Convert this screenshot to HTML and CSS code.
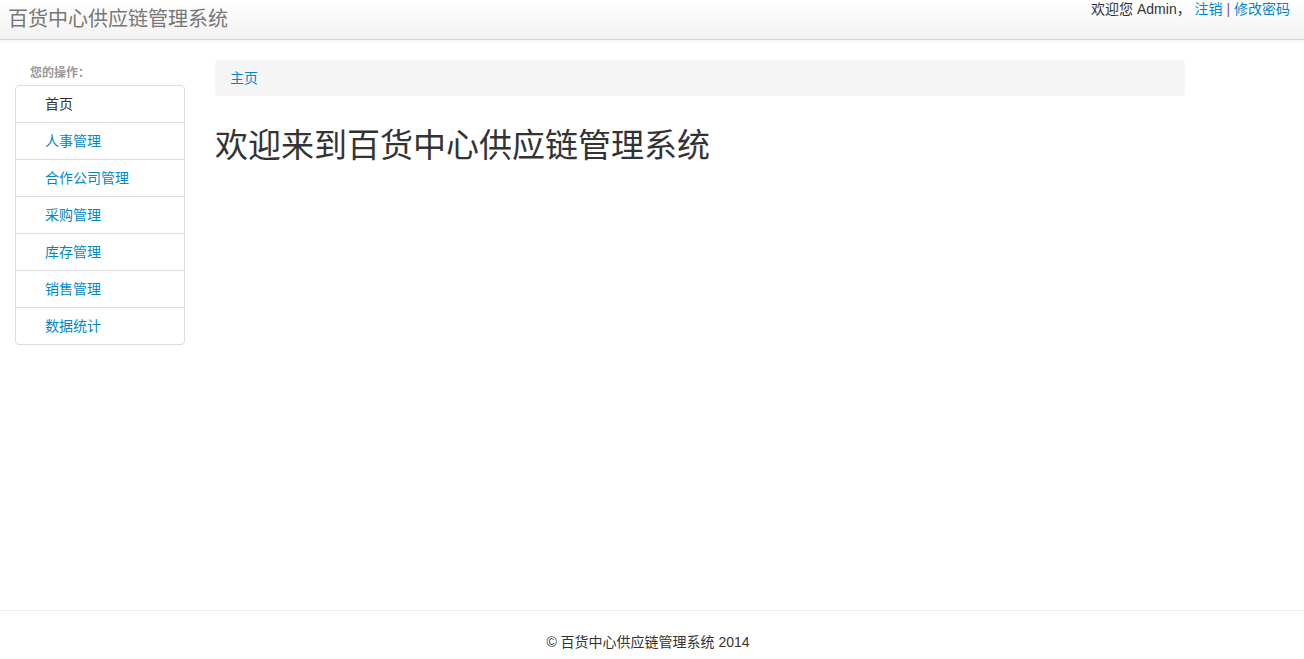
FILE: index.html
```html
<!DOCTYPE html>
<html lang="zh">
<head>
<meta charset="utf-8">
<title>百货中心供应链管理系统</title>
<link rel="stylesheet" href="styles.css">
</head>
<body>
<header class="navbar">
  <div class="brand">百货中心供应链管理系统</div>
  <div class="userbar">欢迎您 Admin， <a href="#">注销</a> <span class="sep">|</span> <a href="#">修改密码</a></div>
</header>
<main class="main">
  <aside class="sidebar">
    <div class="side-label">您的操作：</div>
    <ul class="side-nav">
      <li class="active"><a href="#">首页</a></li>
      <li><a href="#">人事管理</a></li>
      <li><a href="#">合作公司管理</a></li>
      <li><a href="#">采购管理</a></li>
      <li><a href="#">库存管理</a></li>
      <li><a href="#">销售管理</a></li>
      <li><a href="#">数据统计</a></li>
    </ul>
  </aside>
  <section class="content">
    <div class="breadcrumb"><a href="#">主页</a></div>
    <h1 class="welcome">欢迎来到百货中心供应链管理系统</h1>
  </section>
</main>
<footer class="footer">© 百货中心供应链管理系统 2014</footer>
</body>
</html>
```
FILE: styles.css
```css
html, body {
  margin: 0;
  padding: 0;
}
body {
  font-family: "Liberation Sans", Arial, "Noto Sans CJK SC", sans-serif;
  font-size: 14px;
  color: #333;
  background: #fff;
  min-height: 100vh;
  display: flex;
  flex-direction: column;
}
a {
  color: #0088cc;
  text-decoration: none;
}
.navbar {
  height: 39px;
  background: linear-gradient(to bottom, #ffffff, #f2f2f2);
  border-bottom: 1px solid #d4d4d4;
  box-shadow: 0 1px 4px rgba(0,0,0,0.065);
  display: flex;
  justify-content: space-between;
  align-items: flex-start;
}
.brand {
  font-size: 20px;
  color: #777;
  padding: 7px 0 0 8px;
  line-height: 24px;
}
.userbar {
  padding: 0 14px 0 0;
  line-height: 18px;
  font-size: 14px;
  color: #333;
}
.userbar .sep {
  color: #7a4f9a;
}
.main {
  flex: 1;
  display: flex;
  align-items: flex-start;
  padding: 20px 0 0 15px;
  gap: 30px;
}
.sidebar {
  width: 170px;
}
.side-label {
  font-size: 12px;
  font-weight: bold;
  color: #999;
  line-height: 14px;
  padding: 6px 0 5px 15px;
}
.side-nav {
  list-style: none;
  margin: 0;
  padding: 0;
  border: 1px solid #ddd;
  border-radius: 4px;
}
.side-nav li {
  border-top: 1px solid #ddd;
}
.side-nav li:first-child {
  border-top: none;
}
.side-nav a {
  display: block;
  height: 36px;
  line-height: 36px;
  padding-left: 29px;
  font-size: 14px;
}
.side-nav li.active a {
  color: #333;
}
.content {
  width: 970px;
}
.breadcrumb {
  background: #f5f5f5;
  border-radius: 4px;
  height: 36px;
  line-height: 36px;
  padding: 0 15px;
  font-size: 14px;
}
.welcome {
  margin: 30px 0 0 0;
  font-family: "Liberation Serif", "Noto Sans CJK SC", serif;
  font-weight: normal;
  font-size: 33px;
  line-height: 40px;
  color: #333;
}
.footer {
  border-top: 1px solid #eee;
  line-height: 18px;
  padding: 22px 8px 0 0;
  box-sizing: border-box;
  height: 49px;
  text-align: center;
  font-size: 14px;
  color: #333;
}
```
